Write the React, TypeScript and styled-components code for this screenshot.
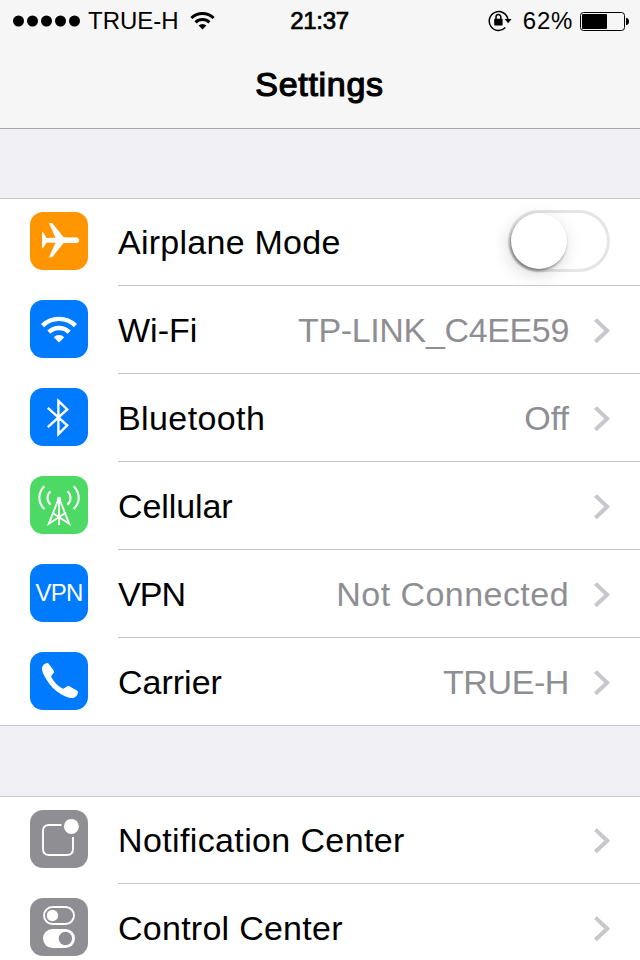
import React from "react";
import styled, { createGlobalStyle } from "styled-components";

const GlobalStyle = createGlobalStyle`
  * { box-sizing: border-box; }
  html, body { margin: 0; padding: 0; }
  body {
    background: #efeff4;
    font-family: "Liberation Sans", Arial, Helvetica, sans-serif;
    color: #000;
    overflow: hidden;
  }
  svg { display: block; }
`;

const Screen = styled.div`
  width: 640px;
  height: 960px;
  overflow: hidden;
  background: #efeff4;
`;

const Header = styled.header`
  height: 129px;
  background: #f6f6f6;
  border-bottom: 1px solid #a7a7ab;
`;

const StatusBar = styled.div`
  height: 40px;
  display: grid;
  grid-template-columns: 1fr auto 1fr;
  align-items: center;
  padding: 1px 11px 0 13px;
  font-size: 24px;
  line-height: 40px;
`;

const StatusSide = styled.div<{ $end?: boolean }>`
  display: flex;
  align-items: center;
  justify-content: ${(p) => (p.$end ? "flex-end" : "flex-start")};
`;

const StatusText = styled.span<{ $tracking: number; $left: number; $right: number }>`
  letter-spacing: ${(p) => p.$tracking}px;
  margin: 0 ${(p) => p.$right}px 0 ${(p) => p.$left}px;
`;

const Clock = styled.span`
  margin-right: 3px;
  -webkit-text-stroke: 0.7px #000;
  letter-spacing: -0.3px;
`;

const Title = styled.h1`
  margin: 0;
  padding-right: 1px;
  text-align: center;
  font-size: 34px;
  font-weight: 400;
  line-height: 88px;
  letter-spacing: 0.7px;
  -webkit-text-stroke: 1.2px #000;
`;

const Group = styled.section<{ $gap: number }>`
  margin-top: ${(p) => p.$gap}px;
  background: #fff;
  border-top: 1px solid #c8c7cc;
`;

const Row = styled.div`
  display: flex;
  height: 88px;
  padding-left: 30px;
  &:first-child { margin-top: -1px; }
`;

const Tile = styled.div<{ $color: string }>`
  flex: none;
  width: 58px;
  height: 58px;
  margin: 14px 30px 0 0;
  border-radius: 13px;
  background: ${(p) => p.$color};
  overflow: hidden;
`;

const TileText = styled.div`
  color: #fff;
  font-size: 24px;
  line-height: 58px;
  text-align: center;
  letter-spacing: -0.7px;
`;

const RowBody = styled.div<{ $line: boolean }>`
  flex: 1;
  display: flex;
  height: 88px;
  padding-right: 30px;
  border-bottom: 1px solid ${(p) => (p.$line ? "#c8c7cc" : "transparent")};
`;

const Label = styled.span<{ $tracking: number }>`
  font-size: 34px;
  line-height: 88px;
  white-space: nowrap;
  letter-spacing: ${(p) => p.$tracking}px;
`;

const Value = styled(Label)`
  margin-left: auto;
  color: #8e8e93;
`;

const Chevron = styled.svg<{ $alone: boolean }>`
  flex: none;
  margin: 32px 0 0 ${(p) => (p.$alone ? "auto" : "25px")};
`;

const Track = styled.div`
  width: 102px;
  height: 62px;
  margin: 12px 0 0 auto;
  padding: 3px;
  border-radius: 31px;
  box-shadow: inset 0 0 0 3px #e5e5e5;
`;

const Knob = styled.div`
  width: 56px;
  height: 56px;
  border-radius: 50%;
  background: #fff;
  box-shadow: -1px 2px 3px rgba(0, 0, 0, 0.42), -2px 5px 18px rgba(0, 0, 0, 0.16);
`;

/* Wi-Fi fan: two 90 degree bands and a wedge, all around one apex. */
function WifiFan({ cx, cy, bands, wedge, color }: {
  cx: number; cy: number; bands: [number, number][]; wedge: number; color: string;
}) {
  const s = 0.695;
  const c = 0.719;
  const arc = (r: number) => `${cx - r * s} ${cy - r * c}A${r} ${r} 0 0 1 ${cx + r * s} ${cy - r * c}`;
  return (
    <g fill="none" stroke={color}>
      {bands.map(([r, w]) => <path key={r} d={`M${arc(r)}`} strokeWidth={w} />)}
      <path d={`M${cx} ${cy}L${arc(wedge)}Z`} fill={color} stroke="none" />
    </g>
  );
}

const SignalDots = () => (
  <svg width="68" height="12" viewBox="0 0 68 12">
    {[5.5, 19.5, 33.5, 47.5, 61.5].map((x) => <circle key={x} cx={x} cy="6" r="5.5" />)}
  </svg>
);

const StatusWifi = () => (
  <svg width="25" height="20" viewBox="0 0 25 20">
    <WifiFan cx={12.5} cy={18.5} bands={[[16, 3], [10, 3]]} wedge={5.6} color="#000" />
  </svg>
);

const RotationLock = () => (
  <svg width="24" height="22" viewBox="0 0 24 22">
    <path d="M17.4 17.6A9.4 9.4 0 1 1 19.9 9.3" fill="none" stroke="#000" strokeWidth="1.5" />
    <path d="M16.6 9H23.6L20.1 13.2Z" />
    <rect x="6.2" y="8.8" width="8.4" height="6.6" rx="0.6" />
    <path d="M8 9.6V7a2.4 2.4 0 0 1 4.8 0V9.6" fill="none" stroke="#000" strokeWidth="1.5" />
  </svg>
);

const Battery = () => (
  <svg width="49" height="19" viewBox="0 0 49 19">
    <rect x="0.5" y="0.5" width="44" height="18" rx="3" fill="none" stroke="#000" />
    <rect x="2" y="2" width="25" height="15" rx="1" />
    <path d="M46 5.8c2 .3 3 1.7 3 3.7s-1 3.4-3 3.7Z" />
  </svg>
);

const Plane = () => (
  <svg width="58" height="58" viewBox="0 0 58 58" fill="#fff">
    <path d="M12 20H12.9L16.6 26L25.4 25.7L19 11H22.2L33.6 25.3L46.2 25.4C48.2 25.6 49.2 26.7 49.2 28.2C49.2 29.7 48.2 30.8 46.2 31L33.6 31.1L22.2 45.2H19L25.4 30.7L16.6 30.4L12.9 36.2H12Z" />
  </svg>
);

const WifiIcon = () => (
  <svg width="58" height="58" viewBox="0 0 58 58">
    <WifiFan cx={29} cy={42.6} bands={[[23.7, 4.4], [14.6, 4.4]]} wedge={7.6} color="#fff" />
  </svg>
);

const BluetoothIcon = () => (
  <svg width="58" height="58" viewBox="0 0 58 58" fill="none" stroke="#fff" strokeWidth="2.4">
    <path d="M17.8 19.8L37.2 37.3L28.4 46.1V12.9L37.2 21.5L17.8 39.2" />
  </svg>
);

const CellularIcon = () => (
  <svg width="58" height="58" viewBox="0 0 58 58" fill="none" stroke="#fff" strokeWidth="2.1">
    <path d="M14.3 10.3Q9.3 15.5 9.3 21.7T14.3 33.1M43.7 10.3Q48.7 15.5 48.7 21.7T43.7 33.1" />
    <path d="M20.5 15.3Q17.5 18.2 17.5 22T20.5 28.8M37.5 15.3Q40.5 18.2 40.5 22T37.5 28.8" />
    <path d="M29 22V49M28.5 23L18.8 47.8L34.5 37.5M29.5 23L39.2 47.8L23.5 37.5" strokeWidth="1.8" />
    <circle cx="29" cy="23" r="2.2" fill="#fff" stroke="none" />
  </svg>
);

const PhoneIcon = () => (
  <svg width="58" height="58" viewBox="0 0 58 58" fill="#fff">
    <path d="M12 16C12.3 13.5 14.5 11.6 16.8 11C17.7 10.8 18.3 11.2 18.9 12L23.7 18.6C24.3 19.5 24.2 20.1 23.6 20.9L21.7 23.3C21.2 24 21.2 24.7 21.6 25.5C23.5 29.5 28 34 32 36.3C32.8 36.7 33.5 36.7 34.2 36.2L37.4 34.3C38.3 33.8 39 33.8 39.9 34.4L46.8 38.4C47.9 39.1 48.1 39.8 47.9 40.9C47.4 43.4 45.5 45.3 43.2 45.9C40.2 46.6 35 44.5 31.5 42.5C24.5 38.5 19.5 33 15.5 26C13.5 22.5 11.7 18.8 12 16Z" />
  </svg>
);

const NotificationIcon = () => (
  <svg width="58" height="58" viewBox="0 0 58 58" fill="none" stroke="#fff" strokeWidth="1.9">
    <path d="M31.5 15H19Q13 15 13 21V39Q13 45 19 45H37Q43 45 43 39V27" />
    <circle cx="41.4" cy="16.4" r="7.5" fill="#fff" stroke="none" />
  </svg>
);

const ControlIcon = () => (
  <svg width="58" height="58" viewBox="0 0 58 58" fill="#fff">
    <rect x="14" y="9" width="30" height="17" rx="8.5" fill="none" stroke="#fff" strokeWidth="1.9" />
    <circle cx="22.4" cy="17.5" r="5.7" />
    <rect x="13" y="31" width="32" height="19" rx="9.5" />
    <circle cx="35.4" cy="40.5" r="6.7" fill="#8e8e93" />
  </svg>
);

type Item = {
  label: string;
  tracking: number;
  color: string;
  icon: React.ReactNode;
  value?: string;
  valueTracking?: number;
  toggle?: boolean;
};

const groups: { gap: number; items: Item[] }[] = [
  {
    gap: 69,
    items: [
      { label: "Airplane Mode", tracking: 0.26, color: "#ff9500", icon: <Plane />, toggle: true },
      { label: "Wi-Fi", tracking: 0, color: "#007aff", icon: <WifiIcon />, value: "TP-LINK_C4EE59", valueTracking: -0.35 },
      { label: "Bluetooth", tracking: 0.4, color: "#007aff", icon: <BluetoothIcon />, value: "Off", valueTracking: 0 },
      { label: "Cellular", tracking: -0.1, color: "#4cd964", icon: <CellularIcon /> },
      { label: "VPN", tracking: -0.9, color: "#007aff", icon: <TileText>VPN</TileText>, value: "Not Connected", valueTracking: 0.45 },
      { label: "Carrier", tracking: 0, color: "#007aff", icon: <PhoneIcon />, value: "TRUE-H", valueTracking: -0.4 },
    ],
  },
  {
    gap: 70,
    items: [
      { label: "Notification Center", tracking: 0.37, color: "#8e8e93", icon: <NotificationIcon /> },
      { label: "Control Center", tracking: 0.26, color: "#8e8e93", icon: <ControlIcon /> },
    ],
  },
];

const LastLine = styled.div`
  height: 1px;
  margin-top: -1px;
  background: #c8c7cc;
`;

export default function App() {
  return (
    <Screen>
      <GlobalStyle />
      <Header>
        <StatusBar>
          <StatusSide>
            <SignalDots />
            <StatusText $tracking={0} $left={7} $right={11}>TRUE-H</StatusText>
            <StatusWifi />
          </StatusSide>
          <Clock>21:37</Clock>
          <StatusSide $end>
            <RotationLock />
            <StatusText $tracking={0.7} $left={11} $right={7}>62%</StatusText>
            <Battery />
          </StatusSide>
        </StatusBar>
        <Title>Settings</Title>
      </Header>
      {groups.map((group, g) => (
        <Group key={g} $gap={group.gap}>
          {group.items.map((item, i) => (
            <Row key={item.label}>
              <Tile $color={item.color}>{item.icon}</Tile>
              <RowBody $line={i < group.items.length - 1}>
                <Label $tracking={item.tracking}>{item.label}</Label>
                {item.value && <Value $tracking={item.valueTracking ?? 0}>{item.value}</Value>}
                {item.toggle ? (
                  <Track><Knob /></Track>
                ) : (
                  <Chevron $alone={!item.value} width="16" height="26" viewBox="0 0 16 26">
                    <path d="M1.4 1.6L13.2 12.7L1.4 23.8" fill="none" stroke="#c7c7cc" strokeWidth="4" />
                  </Chevron>
                )}
              </RowBody>
            </Row>
          ))}
          <LastLine />
        </Group>
      ))}
    </Screen>
  );
}
